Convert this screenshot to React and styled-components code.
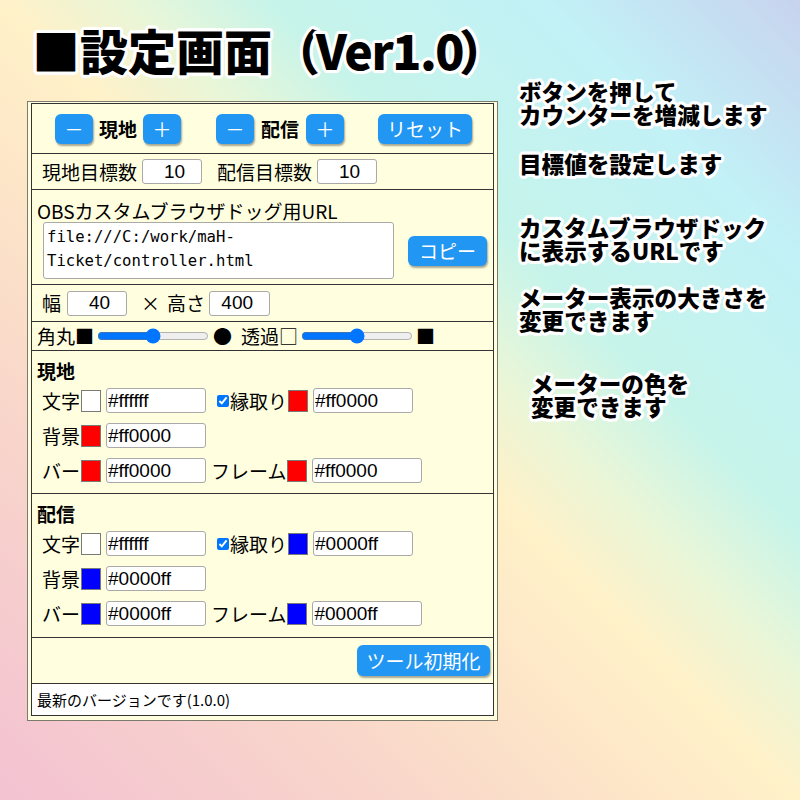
import React from "react";
import styled, { createGlobalStyle } from "styled-components";

const JP = `"Noto Sans CJK JP", "Noto Sans", sans-serif`;
const LATIN = `"Liberation Sans", Arial, "Noto Sans CJK JP", sans-serif`;

const outline = (r) => {
  const list = [];
  for (let i = 0; i < 16; i++) {
    const a = (i / 16) * Math.PI * 2;
    list.push(`${(Math.cos(a) * r).toFixed(2)}px ${(Math.sin(a) * r).toFixed(2)}px 0 #fff`);
  }
  list.push(`0 0 ${r + 2}px #fff`);
  return list.join(", ");
};

const GlobalStyle = createGlobalStyle`
  html, body { margin: 0; padding: 0; }
  body { font-family: ${JP}; color: #000; }
`;

const Page = styled.div`
  width: 800px;
  height: 800px;
  overflow: hidden;
  box-sizing: border-box;
  padding-top: 21px;
  background: linear-gradient(
    45deg,
    #f3c2d2 0%,
    #f8d3cb 22%,
    #fde6c8 40%,
    #fff1c8 50%,
    #e9f6d8 58%,
    #c6f4ea 67%,
    #c2f1f7 84%,
    #c8d3ee 100%
  );
`;

const Title = styled.h1`
  margin: 0 0 0 32px;
  font: 900 48px/56px ${JP};
  white-space: nowrap;
  text-shadow: ${outline(3)};
`;

const Tight = styled.span`
  letter-spacing: -1.5px;
  margin: 0 -4px 0 -4px;
`;

const Body = styled.div`
  display: flex;
  align-items: flex-start;
  margin-top: 3px;
`;

const Notes = styled.div`
  display: flex;
  flex-direction: column;
  margin-left: 21px;
`;

const Note = styled.div`
  margin-top: ${(p) => p.$top || 0}px;
  padding-left: ${(p) => p.$indent || 0}px;
  font: 900 22.6px/23px ${JP};
  white-space: nowrap;
  text-shadow: ${outline(3)};
`;

const Panel = styled.div`
  margin: 21px 0 0 27px;
  width: 471px;
  box-sizing: border-box;
  border: 1px solid #7c7c6c;
  background: #ffffe0;
  padding: 1px 3px 4px;
`;

const Table = styled.div`
  border: 1px solid #333;
`;

const Row = styled.div`
  height: ${(p) => p.$h}px;
  display: flex;
  align-items: center;
  justify-content: ${(p) => (p.$end ? "flex-end" : "flex-start")};
  padding: 0 ${(p) => p.$right || 0}px 0 ${(p) => p.$left ?? 5}px;
  background: ${(p) => (p.$white ? "#fff" : "transparent")};
  & + & {
    border-top: 1px solid #333;
  }
`;

const Stack = styled(Row)`
  flex-direction: column;
  align-items: stretch;
  justify-content: flex-start;
  padding-top: ${(p) => p.$top || 0}px;
  box-sizing: content-box;
  height: ${(p) => p.$h - (p.$top || 0)}px;
`;

const Group = styled.div`
  display: flex;
  align-items: center;
  gap: ${(p) => p.$gap || 0}px;
  margin-left: ${(p) => p.$ml || 0}px;
`;

const Text = styled.span`
  font: ${(p) => (p.$bold ? 700 : 400)} ${(p) => p.$size || 19}px/${(p) => p.$lh || 24}px ${JP};
  margin-left: ${(p) => p.$ml || 0}px;
  white-space: nowrap;
`;

const Heading = styled.div`
  font: 700 19px/24px ${JP};
`;

const Btn = styled.button`
  width: ${(p) => p.$w}px;
  height: ${(p) => p.$h || 30}px;
  flex: none;
  padding: 0;
  border: none;
  border-radius: 6px;
  background: #2196f3;
  color: #fff;
  font: 400 ${(p) => p.$size || 19}px/1 ${JP};
  box-shadow: 1px 2px 2px rgba(0, 0, 0, 0.35);
  margin-left: ${(p) => p.$ml || 0}px;
  cursor: pointer;
`;

const NumBox = styled.input`
  width: ${(p) => p.$w || 60}px;
  height: 25px;
  box-sizing: border-box;
  margin: 0 0 0 ${(p) => p.$ml || 0}px;
  padding: 0 16px 0 2px;
  border: 1px solid #a9a9a9;
  border-radius: 3px;
  background: #fff;
  font: 19px ${LATIN};
  text-align: right;
`;

const HexBox = styled.input`
  width: ${(p) => p.$w || 100}px;
  height: 25px;
  box-sizing: border-box;
  margin: 0 0 0 5px;
  padding: 0 1px;
  border: 1px solid #a9a9a9;
  border-radius: 3px;
  background: #fff;
  font: 19px ${LATIN};
`;

const Chip = styled.input.attrs({ type: "color" })`
  width: 20px;
  height: 22px;
  box-sizing: border-box;
  margin: 0 0 0 1px;
  padding: 0;
  border: 1px solid #7a7a7a;
  background: ${(p) => p.value};
  &::-webkit-color-swatch-wrapper {
    padding: 0;
  }
  &::-webkit-color-swatch {
    border: none;
  }
`;

const Check = styled.input.attrs({ type: "checkbox" })`
  width: 12px;
  height: 12px;
  margin: 0 1px 0 6px;
`;

const Slider = styled.input.attrs({ type: "range" })`
  width: 112px;
  margin: 0 0 0 3px;
`;

const UrlBox = styled.textarea`
  width: 351px;
  height: 57px;
  box-sizing: border-box;
  margin: 0 0 0 6px;
  padding: 2px 3px;
  border: 1px solid #a9a9a9;
  border-radius: 3px;
  background: #fff;
  font: 15.6px/24px "DejaVu Sans Mono", "Liberation Mono", monospace;
  resize: none;
  overflow: hidden;
`;

const ColorLine = styled.div`
  height: 35px;
  display: flex;
  align-items: center;
  padding-left: 5px;
  gap: 5px;
`;

const ColorSection = ({ title, color, h }) => (
  <Stack $h={h} $top={8}>
    <Heading>{title}</Heading>
    <ColorLine>
      <Group>
        <Text>文字</Text>
        <Chip value="#ffffff" readOnly />
        <HexBox defaultValue="#ffffff" />
      </Group>
      <Group>
        <Check defaultChecked />
        <Text>縁取り</Text>
        <Chip value={color} readOnly />
        <HexBox defaultValue={color} />
      </Group>
    </ColorLine>
    <ColorLine>
      <Group>
        <Text>背景</Text>
        <Chip value={color} readOnly />
        <HexBox defaultValue={color} />
      </Group>
    </ColorLine>
    <ColorLine>
      <Group>
        <Text>バー</Text>
        <Chip value={color} readOnly />
        <HexBox defaultValue={color} />
      </Group>
      <Group>
        <Text>フレーム</Text>
        <Chip value={color} readOnly />
        <HexBox defaultValue={color} $w={110} />
      </Group>
    </ColorLine>
  </Stack>
);

export default function App() {
  return (
    <>
      <GlobalStyle />
      <Page>
        <Title>
          ■設定画面（<Tight>Ver1.0</Tight>）
        </Title>
        <Body>
          <Panel>
            <Table>
              <Row $h={49} $left={23}>
                <Group $gap={6}>
                  <Btn $w={38}>－</Btn>
                  <Text $bold>現地</Text>
                  <Btn $w={38}>＋</Btn>
                </Group>
                <Group $gap={7} $ml={35}>
                  <Btn $w={38}>－</Btn>
                  <Text $bold>配信</Text>
                  <Btn $w={38}>＋</Btn>
                </Group>
                <Btn $w={94} $ml={34}>リセット</Btn>
              </Row>
              <Row $h={35} $left={10}>
                <Text>現地目標数</Text>
                <NumBox defaultValue="10" $ml={5} />
                <Text $ml={15}>配信目標数</Text>
                <NumBox defaultValue="10" $ml={5} />
              </Row>
              <Stack $h={94} $top={10}>
                <Text $lh={22}>OBSカスタムブラウザドッグ用URL</Text>
                <Group>
                  <UrlBox defaultValue="file:///C:/work/maH-Ticket/controller.html" />
                  <Btn $w={79} $ml={14}>コピー</Btn>
                </Group>
              </Stack>
              <Row $h={36} $left={10}>
                <Text>幅</Text>
                <NumBox defaultValue="40" $ml={6} />
                <Text $ml={14}>×</Text>
                <Text $ml={7}>高さ</Text>
                <NumBox defaultValue="400" $w={61} $ml={4} />
              </Row>
              <Row $h={28}>
                <Text>角丸■</Text>
                <Slider defaultValue={50} />
                <Text $ml={4}>●</Text>
                <Text $ml={9}>透過□</Text>
                <Slider defaultValue={50} />
                <Text $ml={3}>■</Text>
              </Row>
              <ColorSection title="現地" color="#ff0000" h={142} />
              <ColorSection title="配信" color="#0000ff" h={143} />
              <Row $h={45} $end $right={3}>
                <Btn $w={133} $h={31}>ツール初期化</Btn>
              </Row>
              <Row $h={31} $white>
                <Text $size={15}>最新のバージョンです(1.0.0)</Text>
              </Row>
            </Table>
          </Panel>
          <Notes>
            <Note>
              ボタンを押して
              <br />
              カウンターを増減します
            </Note>
            <Note $top={26}>目標値を設定します</Note>
            <Note $top={41}>
              カスタムブラウザドック
              <br />
              に表示するURLです
            </Note>
            <Note $top={24}>
              メーター表示の大きさを
              <br />
              変更できます
            </Note>
            <Note $top={40} $indent={12}>
              メーターの色を
              <br />
              変更できます
            </Note>
          </Notes>
        </Body>
      </Page>
    </>
  );
}
